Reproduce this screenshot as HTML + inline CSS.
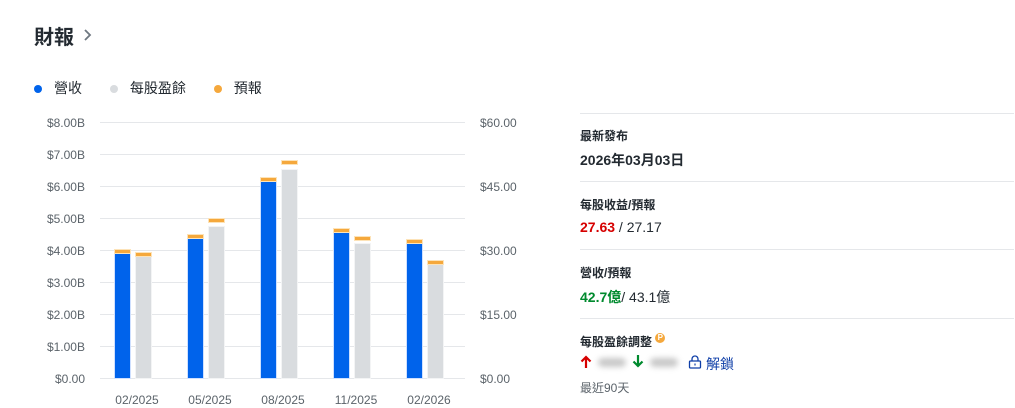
<!DOCTYPE html>
<html><head><meta charset="utf-8"><style>
*{margin:0;padding:0;box-sizing:border-box}
body{width:1015px;height:408px;background:#fff;font-family:"Liberation Sans","Noto Sans CJK TC",sans-serif;color:#232a31;position:relative;overflow:hidden}
.a{position:absolute}
.gl{position:absolute;left:100px;width:365px;height:1px;background:#e5e7ea}
.yl{position:absolute;left:30px;width:55px;text-align:right;font-size:12px;color:#5b636a}
.yr{position:absolute;left:480px;font-size:12px;color:#5b636a}
.xl{position:absolute;top:393px;font-size:12px;color:#5b636a;width:60px;text-align:center}
.b{position:absolute;width:15px;bottom:30px}
.bl{background:#0063eb;box-shadow:0 0 0 1px #cfe0ff}
.gr{background:#d9dcdf;box-shadow:0 0 0 1px #f3f4f5}
.o{position:absolute;width:15px;height:3px;background:#f5a83c;box-shadow:0 0 0 1px #fde3b8}
.sep{position:absolute;left:580px;width:434px;height:1px;background:#e5e7ea}
.t{position:absolute;left:580px;font-size:12px;font-weight:bold}
.v{position:absolute;left:580px;font-size:14px}
</style></head><body>
<div class="a" style="left:34px;top:21px;font-size:20px;font-weight:bold">財報</div>
<svg class="a" style="left:82px;top:28px" width="12" height="14" viewBox="0 0 12 14"><path d="M3 2l5 5-5 5" fill="none" stroke="#6e7780" stroke-width="1.8"/></svg>
<div class="a" style="left:34px;top:78px;font-size:14px;color:#232a31">
<span style="display:inline-block;width:8px;height:8px;border-radius:50%;background:#0063eb;margin-right:12px"></span>營收
<span style="display:inline-block;width:8px;height:8px;border-radius:50%;background:#d9dcdf;margin:0 12px 0 24px"></span>每股盈餘
<span style="display:inline-block;width:8px;height:8px;border-radius:50%;background:#f5a83c;margin:0 12px 0 24px"></span>預報</div>

<div class="gl" style="top:122px"></div><div class="gl" style="top:154px"></div><div class="gl" style="top:186px"></div><div class="gl" style="top:218px"></div><div class="gl" style="top:250px"></div><div class="gl" style="top:282px"></div><div class="gl" style="top:314px"></div><div class="gl" style="top:346px"></div><div class="gl" style="top:378px"></div>
<div class="yl" style="top:116px">$8.00B</div><div class="yl" style="top:148px">$7.00B</div><div class="yl" style="top:180px">$6.00B</div><div class="yl" style="top:212px">$5.00B</div><div class="yl" style="top:244px">$4.00B</div><div class="yl" style="top:276px">$3.00B</div><div class="yl" style="top:308px">$2.00B</div><div class="yl" style="top:340px">$1.00B</div><div class="yl" style="top:372px">$0.00</div>
<div class="yr" style="top:116px">$60.00</div><div class="yr" style="top:180px">$45.00</div><div class="yr" style="top:244px">$30.00</div><div class="yr" style="top:308px">$15.00</div><div class="yr" style="top:372px">$0.00</div>

<div class="b bl" style="left:115px;top:253px;height:125px"></div><div class="b gr" style="left:136px;top:257px;height:121px"></div>
<div class="o" style="left:115px;top:250px"></div><div class="o" style="left:136px;top:253px"></div>
<div class="b bl" style="left:188px;top:239px;height:139px"></div><div class="b gr" style="left:209px;top:227px;height:151px"></div>
<div class="o" style="left:188px;top:235px"></div><div class="o" style="left:209px;top:219px"></div>
<div class="b bl" style="left:261px;top:181px;height:197px"></div><div class="b gr" style="left:282px;top:170px;height:208px"></div>
<div class="o" style="left:261px;top:178px"></div><div class="o" style="left:282px;top:161px"></div>
<div class="b bl" style="left:334px;top:232px;height:146px"></div><div class="b gr" style="left:355px;top:244px;height:134px"></div>
<div class="o" style="left:334px;top:229px"></div><div class="o" style="left:355px;top:237px"></div>
<div class="b bl" style="left:407px;top:242px;height:136px"></div><div class="b gr" style="left:428px;top:265px;height:113px"></div>
<div class="o" style="left:407px;top:240px"></div><div class="o" style="left:428px;top:261px"></div>

<div class="xl" style="left:107px">02/2025</div><div class="xl" style="left:180px">05/2025</div><div class="xl" style="left:253px">08/2025</div><div class="xl" style="left:326px">11/2025</div><div class="xl" style="left:399px">02/2026</div>

<div class="sep" style="top:113px"></div>
<div class="t" style="top:127px">最新發布</div>
<div class="v" style="top:150px;font-weight:bold">2026年03月03日</div>
<div class="sep" style="top:181px"></div>
<div class="t" style="top:196px">每股收益/預報</div>
<div class="v" style="top:219px"><b style="color:#d60000">27.63</b> / 27.17</div>
<div class="sep" style="top:249px"></div>
<div class="t" style="top:264px">營收/預報</div>
<div class="v" style="top:287px"><b style="color:#008a2e">42.7億</b>/ 43.1億</div>
<div class="sep" style="top:318px"></div>
<div class="t" style="top:333px">每股盈餘調整 <span style="display:inline-block;width:10px;height:10px;border-radius:50%;background:#f5a83c;color:#fff;font-size:8px;line-height:10px;text-align:center;vertical-align:top">P</span></div>
<svg class="a" style="left:580px;top:355px" width="12" height="14" viewBox="0 0 12 14"><path d="M6 13V2M1.5 6.5L6 2l4.5 4.5" fill="none" stroke="#d60000" stroke-width="2.2"/></svg>
<div class="a" style="left:598px;top:358px;width:28px;height:9px;border-radius:5px;background:#c8c8c8;filter:blur(3px)"></div>
<svg class="a" style="left:632px;top:354px" width="12" height="14" viewBox="0 0 12 14"><path d="M6 1v11M1.5 7.5L6 12l4.5-4.5" fill="none" stroke="#008a2e" stroke-width="2.2"/></svg>
<div class="a" style="left:650px;top:358px;width:28px;height:9px;border-radius:5px;background:#c8c8c8;filter:blur(3px)"></div>
<svg class="a" style="left:688px;top:355px" width="14" height="14" viewBox="0 0 14 14"><rect x="1.5" y="6" width="11" height="7" rx="1" fill="none" stroke="#0f3fa8" stroke-width="1.3"/><path d="M4 6V4a3 3 0 0 1 6 0v2" fill="none" stroke="#0f3fa8" stroke-width="1.3"/><rect x="6.4" y="8.5" width="1.2" height="2" fill="#0f3fa8"/></svg>
<div class="a" style="left:706px;top:354px;font-size:14px;color:#0f3fa8">解鎖</div>
<div class="a" style="left:580px;top:379px;font-size:12px;color:#5b636a">最近90天</div>
</body></html>
